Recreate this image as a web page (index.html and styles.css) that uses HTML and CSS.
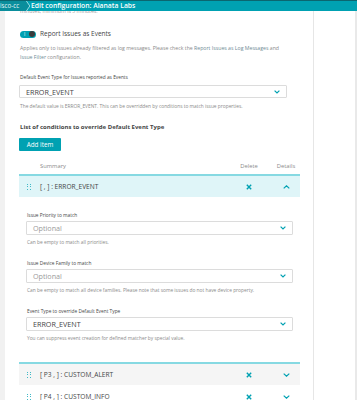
FILE: index.html
```html
<!DOCTYPE html>
<html lang="en">
<head>
    <meta charset="UTF-8">
    <meta name="viewport" content="width=device-width, initial-scale=1.0">
    <title>Edit configuration: Alanata Labs</title>
    <link rel="stylesheet" href="styles.css">
</head>
<body>
    <header class="topbar">
        <div class="crumb crumb-prev">isco-cc</div>
        <svg class="crumb-sep" width="4" height="10" viewBox="0 0 4 10"><polygon points="0,0 3.5,5 0,10" fill="#0a8e9c"/><polyline points="0.4,0 3.8,5 0.4,10" fill="none" stroke="#bfe9ee" stroke-width="0.8"/></svg>
        <div class="crumb crumb-current">Edit configuration: Alanata Labs</div>
    </header>

    <div class="layout">
        <div class="side-left"></div>

        <main class="content">
            <div class="scrolled-off"><span>minutes, minimum is 5 minutes.</span></div>

            <div class="toggle-row">
                <span class="toggle"><span class="toggle-on">I</span><span class="knob"></span></span>
                <span class="toggle-label">Report Issues as Events</span>
            </div>
            <p class="note">
                Applies only to issues already filtered as log messages. Please check the <span class="link">Report Issues as Log Messages</span> and<br>
                <span class="link">Issue Filter</span> configuration.
            </p>

            <div class="field field-main">
                <label class="field-label">Default Event Type for Issues reported as Events</label>
                <div class="select">
                    <span>ERROR_EVENT</span>
                    <svg class="chev" width="6" height="4" viewBox="0 0 6 4"><polyline points="0.6,0.6 3,3 5.4,0.6" fill="none" stroke="#00a1b2" stroke-width="1.2"/></svg>
                </div>
                <div class="hint">The default value is ERROR_EVENT. This can be overridden by conditions to match issue properties.</div>
            </div>

            <h3 class="section-title">List of conditions to override Default Event Type</h3>
            <button class="add-button">Add item</button>

            <div class="table">
                <div class="table-head">
                    <span></span>
                    <span>Summary</span>
                    <span class="col-center">Delete</span>
                    <span class="col-center col-details">Details</span>
                </div>

                <div class="row row-open">
                    <span class="handle"><i></i><i></i><i></i><i></i><i></i><i></i></span>
                    <span class="summary">[ , ] : ERROR_EVENT</span>
                    <span class="col-center">
                        <svg width="6" height="6" viewBox="0 0 6 6"><path d="M0.8 0.8 L5.2 5.2 M5.2 0.8 L0.8 5.2" stroke="#00a1b2" stroke-width="1.4"/></svg>
                    </span>
                    <span class="col-center col-details">
                        <svg width="7" height="4" viewBox="0 0 7 4"><polyline points="0.7,3.4 3.5,0.8 6.3,3.4" fill="none" stroke="#00a1b2" stroke-width="1.2"/></svg>
                    </span>
                </div>

                <div class="row-details">
                    <div class="field">
                        <label class="field-label">Issue Priority to match</label>
                        <div class="select select-tall">
                            <span class="placeholder">Optional</span>
                            <svg class="chev" width="6" height="4" viewBox="0 0 6 4"><polyline points="0.6,0.6 3,3 5.4,0.6" fill="none" stroke="#00a1b2" stroke-width="1.2"/></svg>
                        </div>
                        <div class="hint">Can be empty to match all priorities.</div>
                    </div>
                    <div class="field">
                        <label class="field-label">Issue Device Family to match</label>
                        <div class="select select-tall">
                            <span class="placeholder">Optional</span>
                            <svg class="chev" width="6" height="4" viewBox="0 0 6 4"><polyline points="0.6,0.6 3,3 5.4,0.6" fill="none" stroke="#00a1b2" stroke-width="1.2"/></svg>
                        </div>
                        <div class="hint">Can be empty to match all device families. Please note that some issues do not have device property.</div>
                    </div>
                    <div class="field">
                        <label class="field-label">Event Type to override Default Event Type</label>
                        <div class="select select-tall">
                            <span>ERROR_EVENT</span>
                            <svg class="chev" width="6" height="4" viewBox="0 0 6 4"><polyline points="0.6,0.6 3,3 5.4,0.6" fill="none" stroke="#00a1b2" stroke-width="1.2"/></svg>
                        </div>
                        <div class="hint">You can suppress event creation for defined matcher by special value.</div>
                    </div>
                </div>

                <div class="row row-closed">
                    <span class="handle"><i></i><i></i><i></i><i></i><i></i><i></i></span>
                    <span class="summary">[ P3 , ] : CUSTOM_ALERT</span>
                    <span class="col-center">
                        <svg width="6" height="6" viewBox="0 0 6 6"><path d="M0.8 0.8 L5.2 5.2 M5.2 0.8 L0.8 5.2" stroke="#00a1b2" stroke-width="1.4"/></svg>
                    </span>
                    <span class="col-center col-details">
                        <svg width="7" height="4" viewBox="0 0 7 4"><polyline points="0.7,0.6 3.5,3.2 6.3,0.6" fill="none" stroke="#00a1b2" stroke-width="1.2"/></svg>
                    </span>
                </div>

                <div class="row row-plain">
                    <span class="handle"><i></i><i></i><i></i><i></i><i></i><i></i></span>
                    <span class="summary">[ P4 , ] : CUSTOM_INFO</span>
                    <span class="col-center">
                        <svg width="6" height="6" viewBox="0 0 6 6"><path d="M0.8 0.8 L5.2 5.2 M5.2 0.8 L0.8 5.2" stroke="#00a1b2" stroke-width="1.4"/></svg>
                    </span>
                    <span class="col-center col-details">
                        <svg width="7" height="4" viewBox="0 0 7 4"><polyline points="0.7,0.6 3.5,3.2 6.3,0.6" fill="none" stroke="#00a1b2" stroke-width="1.2"/></svg>
                    </span>
                </div>
            </div>
        </main>

        <div class="side-right"></div>
        <div class="side-edge"></div>
    </div>
</body>
</html>
```

FILE: styles.css
```css
body {
    margin: 0;
    height: 400px;
    overflow: hidden;
    font-family: 'Open Sans', 'DejaVu Sans', sans-serif;
    font-size: 5.2px;
    color: #454646;
    background: white;
}
.topbar {
    display: flex;
    align-items: stretch;
    height: 11px;
    background: #00a1b2;
    border-top: 1px solid #0b6670;
    box-sizing: border-box;
    color: white;
}
.crumb {
    display: flex;
    align-items: center;
    font-size: 6.8px;
    line-height: 10px;
    white-space: nowrap;
}
.crumb-prev {
    background: #0a8e9c;
    width: 26px;
    overflow: hidden;
    color: #e3f6f8;
    font-size: 6.2px;
}
.crumb-sep {
    display: block;
}
.crumb-current {
    padding-left: 1px;
    font-weight: 600;
}
.layout {
    display: grid;
    grid-template-columns: 5px 308px 42px 2px;
    height: 389px;
}
.side-left {
    background: #f1f1f1;
}
.side-right {
    border-left: 1px solid #e6e6e6;
}
.side-edge {
    background: #e9e9e9;
}
.content {
    padding-left: 14px;
    padding-right: 13px;
    display: flex;
    flex-direction: column;
    overflow: hidden;
}
.content > * {
    flex-shrink: 0;
}
.scrolled-off {
    height: 5px;
    overflow: hidden;
    padding-left: 1px;
    color: #9a9a9a;
}
.scrolled-off span {
    display: block;
    line-height: 8px;
    margin-top: -4px;
}
.toggle-row {
    display: flex;
    align-items: center;
    gap: 4px;
    margin-top: 14px;
    padding-left: 1px;
}
.toggle {
    position: relative;
    width: 16px;
    height: 7px;
    border-radius: 4px;
    background: #00a1b2;
    display: flex;
    align-items: center;
}
.toggle-on {
    color: white;
    font-size: 4.5px;
    line-height: 7px;
    padding-left: 4px;
}
.knob {
    position: absolute;
    right: 1px;
    top: 0.5px;
    width: 6px;
    height: 6px;
    border-radius: 50%;
    background: #3b3b3b;
}
.toggle-label {
    font-size: 6.5px;
    line-height: 8px;
}
.note {
    margin: 6px 0 0 1px;
    line-height: 9px;
    color: #8a8a8a;
    white-space: nowrap;
}
.link {
    color: #6e8b95;
}
.field {
    display: flex;
    flex-direction: column;
}
.field-main {
    margin-top: 11px;
    width: 268px;
}
.field-label {
    font-size: 4.8px;
    line-height: 8px;
    padding-left: 1px;
}
.select {
    display: flex;
    align-items: center;
    justify-content: space-between;
    height: 13px;
    margin-top: 4px;
    padding: 0 6px 0 6px;
    border: 1px solid #dcdcdc;
    border-radius: 1px;
    box-sizing: border-box;
    font-size: 7.2px;
    color: #454646;
}
.select-tall {
    height: 14px;
    margin-top: 2px;
}
.placeholder {
    color: #9b9b9b;
}
.chev {
    display: block;
}
.hint {
    margin-top: 4px;
    font-size: 4.85px;
    line-height: 8px;
    padding-left: 1px;
    color: #8a8a8a;
    white-space: nowrap;
}
.section-title {
    margin: 12px 0 0 1px;
    font-size: 6px;
    font-weight: 700;
    line-height: 10px;
    color: #454646;
}
.add-button {
    align-self: flex-start;
    margin-top: 6px;
    width: 42px;
    height: 13px;
    padding: 0;
    border: none;
    border-radius: 1px;
    background: #00a1b2;
    color: white;
    font-family: inherit;
    font-size: 6.3px;
}
.table {
    margin-top: 11px;
    width: 281px;
}
.table-head,
.row {
    display: grid;
    grid-template-columns: 21px 1fr 30px 36px;
    align-items: center;
}
.table-head {
    line-height: 8px;
    font-size: 5.8px;
    color: #8a8a8a;
}
.col-center {
    display: flex;
    justify-content: center;
}
.col-details {
    padding-left: 8px;
}
.row {
    height: 23px;
    box-sizing: border-box;
}
.row-open {
    margin-top: 4px;
    background: #dff5f8;
    border-top: 2px solid #86d9e2;
}
.row-closed {
    background: #f5f5f5;
    border-top: 2px solid #86d9e2;
}
.handle {
    display: grid;
    grid-template-columns: 1px 1px;
    gap: 1.5px 1.5px;
    width: 4px;
    margin-left: 8px;
}
.handle i {
    width: 1px;
    height: 1px;
    background: #3fb9c6;
}
.summary {
    font-size: 6.6px;
}
.row-details {
    padding: 14px 7px 20px 7px;
}
.row-details .field + .field {
    margin-top: 13px;
}
.row-details .hint {
    margin-top: 3px;
}
```
